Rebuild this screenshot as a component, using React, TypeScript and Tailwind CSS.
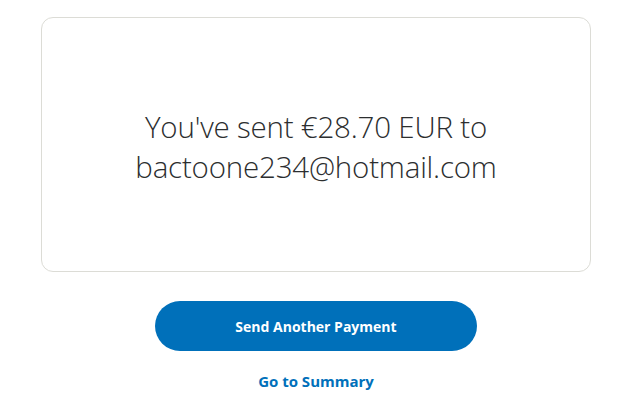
export default function App() {
  return (
    <div className="w-[644px] h-[404px] bg-white pt-[17px] pl-[41px]" style={{ fontFamily: '"Open Sans", "Liberation Sans", sans-serif' }}>
      <div className="w-[550px] h-[255px] rounded-[12px] border border-[#dcdcd6] flex items-center justify-center pt-[4px]">
        <p className="text-[29.5px] leading-[40px] font-light text-[#2c2e2f] text-center tracking-[-0.2px]">
          You've sent €28.70 EUR to<br />bactoone234@hotmail.com
        </p>
      </div>
      <div className="w-[550px] flex flex-col items-center mt-[29px]">
        <button className="w-[322px] h-[50px] rounded-full bg-[#0070ba] text-white text-[14px] font-bold">
          Send Another Payment
        </button>
        <a className="mt-[19px] text-[15px] font-bold text-[#0070ba]">Go to Summary</a>
      </div>
    </div>
  );
}
